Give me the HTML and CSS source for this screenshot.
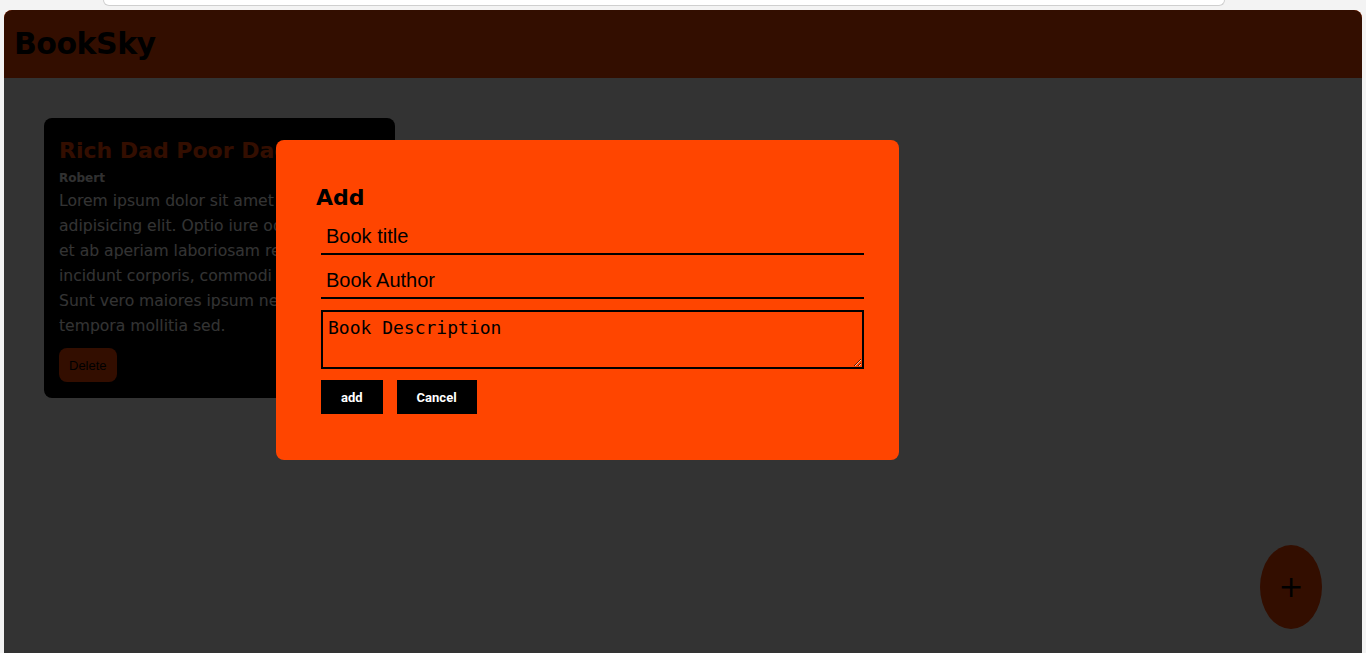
FILE: index.html
```html
<!DOCTYPE html>
<html lang="en">
<head>
<meta charset="utf-8">
<title>BookSky</title>
<link rel="stylesheet" href="styles.css">
</head>
<body>
<div class="chrome"><div class="omnibox"></div></div>
<div class="viewport">
  <header class="topbar"><h1 class="brand">BookSky</h1></header>
  <main class="shelf">
    <article class="book-card">
      <h2 class="book-title">Rich Dad Poor Dad</h2>
      <p class="book-author">Robert</p>
      <p class="book-desc">Lorem ipsum dolor sit amet consectetur<br>adipisicing elit. Optio iure odio quae<br>et ab aperiam laboriosam rerum<br>incidunt corporis, commodi ipsa.<br>Sunt vero maiores ipsum neque<br>tempora mollitia sed.</p>
      <button class="btn-delete" type="button">Delete</button>
    </article>
  </main>
  <button class="fab" type="button">+</button>
  <div class="backdrop"></div>
  <section class="modal">
    <h2 class="modal-title">Add</h2>
    <form class="modal-form">
      <input class="field" type="text" placeholder="Book title">
      <input class="field" type="text" placeholder="Book Author">
      <textarea class="field-area" placeholder="Book Description"></textarea>
      <div class="actions">
        <button class="btn-dark" type="button">add</button>
        <button class="btn-dark" type="button">Cancel</button>
      </div>
    </form>
  </section>
</div>
</body>
</html>
```
FILE: styles.css
```css
* { box-sizing: border-box; }

html, body {
  margin: 0;
  height: 100%;
  overflow: hidden;
}

body {
  background: #f3f3f3;
  font-family: "DejaVu Sans", "Noto Sans", sans-serif;
}

.chrome {
  height: 10px;
}

.omnibox {
  margin-left: 103px;
  width: 1122px;
  height: 6px;
  background: #ffffff;
  border: 1px solid #cfcfcf;
  border-top: none;
  border-radius: 0 0 11px 11px;
}

.viewport {
  position: relative;
  margin: 0 4px;
  height: 643px;
  background: #ffffff;
  border-radius: 8px 8px 0 0;
  overflow: hidden;
}

.topbar {
  height: 68px;
  background: #ff4500;
  padding: 0 10px;
}

.brand {
  margin: 0;
  font-size: 30px;
  letter-spacing: -0.5px;
  line-height: 68px;
  font-weight: bold;
  color: #000;
}

.shelf {
  padding: 40px;
}

.book-card {
  width: 351px;
  background: #000;
  color: #fff;
  border-radius: 8px;
  padding: 15px 15px 16px;
}

.book-title {
  margin: 5px 0 0;
  font-size: 22px;
  line-height: 26px;
  color: #ff4500;
  white-space: nowrap;
}

.book-author {
  margin: 7px 0 0;
  font-size: 12px;
  line-height: 15px;
  font-weight: bold;
  color: #f0f0f0;
}

.book-desc {
  margin: 3px 0 0;
  font-size: 15.6px;
  line-height: 25px;
  white-space: nowrap;
  overflow: hidden;
}

.btn-delete {
  margin-top: 9px;
  height: 34px;
  padding: 0 10px;
  border: none;
  border-radius: 8px;
  background: #ff4500;
  color: #000;
  font-family: "Liberation Sans", Arial, sans-serif;
  font-size: 13px;
}

.fab {
  position: absolute;
  right: 40px;
  bottom: 24px;
  width: 62px;
  height: 84px;
  border: none;
  border-radius: 50%;
  background: #ff4500;
  color: #000;
  font-family: "DejaVu Sans", sans-serif;
  font-size: 30px;
  line-height: 1;
  padding: 0;
  display: flex;
  align-items: center;
  justify-content: center;
}

.backdrop {
  position: absolute;
  inset: 0;
  background: rgba(0, 0, 0, 0.8);
}

.modal {
  position: absolute;
  top: 130px;
  left: 272px;
  width: 623px;
  height: 320px;
  background: #ff4500;
  border-radius: 8px;
  padding: 40px 35px 0 40px;
}

.modal-title {
  margin: 6px 0 0;
  font-size: 22px;
  line-height: 24px;
  color: #000;
}

.modal-form {
  margin-top: 1px;
  padding-left: 5px;
  display: flex;
  flex-direction: column;
}

.field {
  display: block;
  width: 100%;
  height: 44px;
  padding: 14px 5px 5px;
  border: none;
  border-bottom: 2px solid #000;
  background: transparent;
  font-family: "Liberation Sans", Arial, sans-serif;
  font-size: 20px;
  line-height: 23px;
  color: #000;
  outline: none;
}

.field::placeholder {
  color: #000;
  opacity: 1;
}

.field-area {
  display: block;
  margin-top: 11px;
  width: 100%;
  height: 59px;
  padding: 5px;
  border: 2px solid #000;
  background: transparent;
  font-family: "DejaVu Sans Mono", monospace;
  font-size: 18px;
  color: #000;
  resize: vertical;
}

.field-area::placeholder {
  color: #000;
  opacity: 1;
}

.actions {
  margin-top: 11px;
  display: flex;
  gap: 14px;
}

.btn-dark {
  height: 34px;
  padding: 0 20px;
  border: none;
  background: #000;
  color: #fff;
  font-family: Roboto, "Liberation Sans", sans-serif;
  font-size: 13px;
  font-weight: 700;
}
```
